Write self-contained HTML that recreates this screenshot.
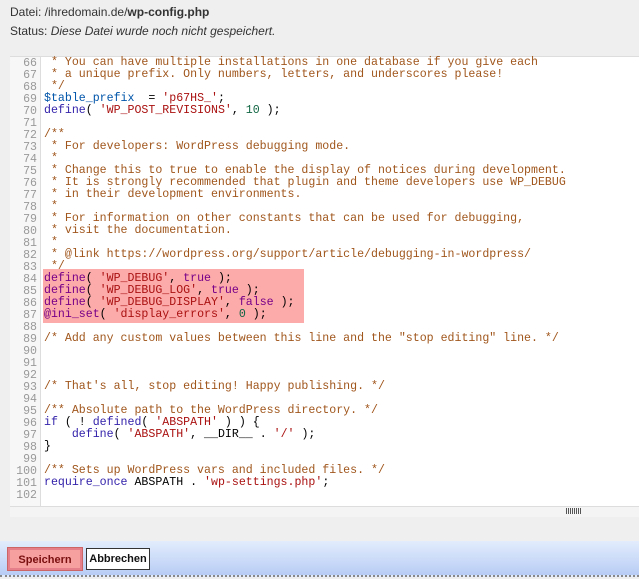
<!DOCTYPE html>
<html><head><meta charset="utf-8"><style>
body{margin:0;width:639px;height:579px;background:#efefef;font-family:"Liberation Sans",sans-serif;position:relative;overflow:hidden}
.hd{position:absolute;left:10px;font-size:12px;color:#333}
.ed{position:absolute;left:10px;top:56px;width:629px;height:450px;background:#fff;border-top:1px solid #ddd}
.gut{position:absolute;left:0;top:0;width:30px;height:450px;background:#f7f7f7;border-right:1px solid #ddd}
pre{margin:0;position:absolute;top:1px;font-family:"Liberation Mono",monospace;font-size:11.6px;line-height:12px}
.ln{left:0;width:27px;text-align:right;color:#999}
.c{color:#a0561c}.k{color:#3322aa}.s{color:#aa1111}.n{color:#116644}.v{color:#0055aa}
.hl{position:absolute;left:43px;top:269px;width:261px;height:54px;background:#fcaaaa}
.hl2 .k{color:#770088}
.sb{position:absolute;left:10px;top:506px;width:629px;height:10px;background:#f4f4f4;border-top:1px solid #ddd}
.grip{position:absolute;left:566px;top:508px;width:16px;height:6px;background:repeating-linear-gradient(90deg,#555 0 1px,transparent 1px 2px)}
.ft{position:absolute;left:0;top:541px;width:639px;height:34px;background:linear-gradient(#e2ecfc,#b8cdf5);border-bottom:2px dotted #888}
.b{position:absolute;top:7px;height:22px;font-size:11px;font-weight:bold;line-height:20px;text-align:center;box-sizing:border-box}
</style></head><body>
<div class="hd" style="top:5px">Datei: /ihredomain.de/<b>wp-config.php</b></div>
<div class="hd" style="top:24px">Status: <i>Diese Datei wurde noch nicht gespeichert.</i></div>
<div class="ed"><div class="gut"></div>
<pre class="ln">66
67
68
69
70
71
72
73
74
75
76
77
78
79
80
81
82
83
84
85
86
87
88
89
90
91
92
93
94
95
96
97
98
99
100
101
102</pre></div>
<div class="hl"></div>
<pre class="cd" style="left:44px;top:57px"><span class="c"> * You can have multiple installations in one database if you give each
 * a unique prefix. Only numbers, letters, and underscores please!
 */</span>
<span class="v">$table_prefix</span>  = <span class="s">'p67HS_'</span>;
<span class="k">define</span>( <span class="s">'WP_POST_REVISIONS'</span>, <span class="n">10</span> );

<span class="c">/**
 * For developers: WordPress debugging mode.
 *
 * Change this to true to enable the display of notices during development.
 * It is strongly recommended that plugin and theme developers use WP_DEBUG
 * in their development environments.
 *
 * For information on other constants that can be used for debugging,
 * visit the documentation.
 *
 * @link https://wordpress.org/support/article/debugging-in-wordpress/
 */</span><span class="hl2">
<span class="k">define</span>( <span class="s">'WP_DEBUG'</span>, <span class="k">true</span> );
<span class="k">define</span>( <span class="s">'WP_DEBUG_LOG'</span>, <span class="k">true</span> );
<span class="k">define</span>( <span class="s">'WP_DEBUG_DISPLAY'</span>, <span class="k">false</span> );
<span class="k">@ini_set</span>( <span class="s">'display_errors'</span>, <span class="n">0</span> );</span>

<span class="c">/* Add any custom values between this line and the "stop editing" line. */</span>



<span class="c">/* That's all, stop editing! Happy publishing. */</span>

<span class="c">/** Absolute path to the WordPress directory. */</span>
<span class="k">if</span> ( ! <span class="k">defined</span>( <span class="s">'ABSPATH'</span> ) ) {
    <span class="k">define</span>( <span class="s">'ABSPATH'</span>, __DIR__ . <span class="s">'/'</span> );
}

<span class="c">/** Sets up WordPress vars and included files. */</span>
<span class="k">require_once</span> ABSPATH . <span class="s">'wp-settings.php'</span>;
</pre>
<div class="sb"></div><div class="grip"></div>
<div class="ft">
<div class="b" style="left:8px;width:74px;background:#f7a0a0;border:2px solid #e57f8a;outline:1px solid #c66;color:#7a1010">Speichern</div>
<div class="b" style="left:86px;width:64px;background:#fff;border:1px solid #333;color:#111">Abbrechen</div>
</div>
</body></html>
